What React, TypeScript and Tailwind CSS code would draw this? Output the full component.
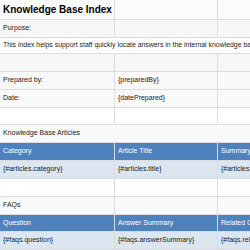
function Row({
  cells,
  h,
  bg = "bg-white",
  span,
  header,
  title,
  big,
}: {
  cells: string[];
  h: string;
  bg?: string;
  span?: boolean;
  header?: boolean;
  title?: boolean;
  big?: boolean;
}) {
  const txt = header ? "text-white" : "text-[#222]";
  if (span) {
    return (
      <div className={`flex items-center border-b border-[#dcdcdc] ${h} ${bg}`}>
        <div className={`pl-[3px] whitespace-nowrap ${big ? "text-[6.9px]" : "text-[7px]"} ${txt}`}>{cells[0]}</div>
      </div>
    );
  }
  const widths = ["w-[115px]", "w-[103px]", "w-[120px]"];
  return (
    <div className={`flex border-b border-[#dcdcdc] ${h} ${bg}`}>
      {widths.map((w, i) => (
        <div
          key={i}
          className={`flex shrink-0 items-center border-r border-[#dcdcdc] ${w} pl-[3px] whitespace-nowrap overflow-hidden ${
            title && i === 0 ? "text-[10px] font-bold text-black" : `text-[7px] ${txt}`
          }`}
        >
          {cells[i] ?? ""}
        </div>
      ))}
    </div>
  );
}

export default function App() {
  return (
    <div className="w-[250px] h-[250px] overflow-hidden bg-white font-['Liberation_Sans',Arial,sans-serif]">
      <div className="w-[340px]">
        <Row cells={["Knowledge Base Index"]} h="h-[20px]" bg="bg-[#fbfbfb]" title />
        <Row cells={["Purpose:"]} h="h-[18px]" bg="bg-[#f7f7f7]" />
        <Row
          cells={["This index helps support staff quickly locate answers in the internal knowledge base and FAQ."]}
          h="h-[16px]"
          span
          big
        />
        <Row cells={[]} h="h-[18px]" bg="bg-[#f7f7f7]" />
        <Row cells={["Prepared by:", "{preparedBy}"]} h="h-[18px]" bg="bg-[#f9f9f9]" />
        <Row cells={["Date:", "{datePrepared}"]} h="h-[18px]" bg="bg-[#f9f9f9]" />
        <Row cells={[]} h="h-[17px]" />
        <Row cells={["Knowledge Base Articles"]} h="h-[18px]" bg="bg-[#f9f9f9]" span />
        <Row cells={["Category", "Article Title", "Summary"]} h="h-[18px]" bg="bg-[#4f81bd]" header />
        <Row
          cells={["{#articles.category}", "{#articles.title}", "{#articles.summary}"]}
          h="h-[18px]"
          bg="bg-[#dce6f1]"
        />
        <Row cells={[]} h="h-[18px]" />
        <Row cells={["FAQs"]} h="h-[18px]" bg="bg-[#f9f9f9]" />
        <Row cells={["Question", "Answer Summary", "Related Category"]} h="h-[17px]" bg="bg-[#4f81bd]" header />
        <Row
          cells={["{#faqs.question}", "{#faqs.answerSummary}", "{#faqs.relatedCategory}"]}
          h="h-[18px]"
          bg="bg-[#dce6f1]"
        />
      </div>
    </div>
  );
}
